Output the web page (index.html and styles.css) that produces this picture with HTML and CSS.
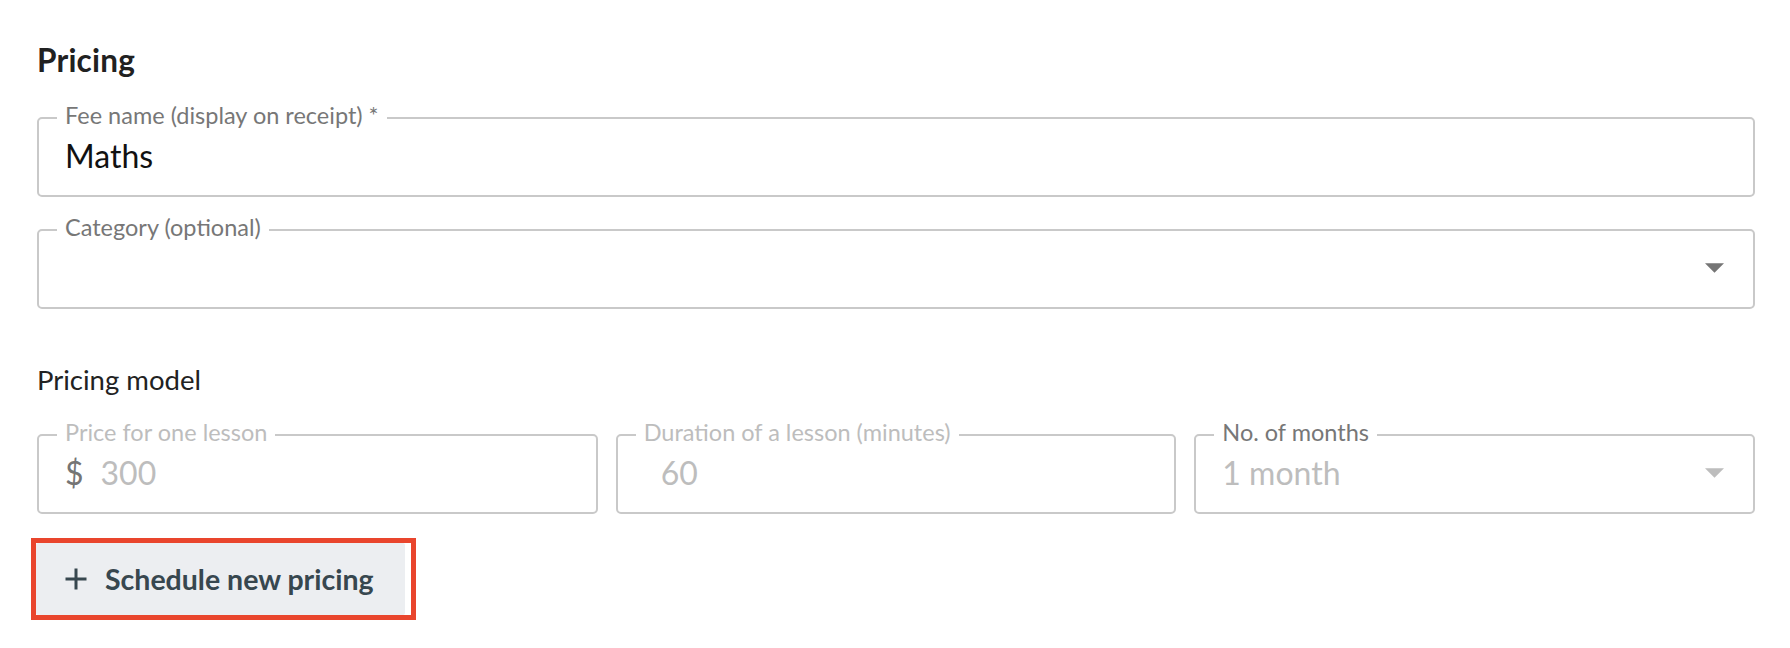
FILE: index.html
```html
<!DOCTYPE html>
<html lang="en">
<head>
<meta charset="utf-8">
<title>Pricing</title>
<link rel="stylesheet" href="styles.css">
</head>
<body>
<main class="page">
  <h2 class="title">Pricing</h2>

  <fieldset class="field field--fee">
    <legend class="field__label">Fee name (display on receipt) *</legend>
    <div class="field__control"><span class="field__value">Maths</span></div>
  </fieldset>

  <fieldset class="field field--category">
    <legend class="field__label">Category (optional)</legend>
    <div class="field__control">
      <span class="field__value"></span>
      <svg class="caret" viewBox="0 0 20 10" aria-hidden="true"><path d="M0 0h20L10 10z"/></svg>
    </div>
  </fieldset>

  <p class="subtitle">Pricing model</p>

  <div class="row">
    <fieldset class="field field--disabled">
      <legend class="field__label">Price for one lesson</legend>
      <div class="field__control">
        <span class="adornment">$</span><span class="field__value">300</span>
      </div>
    </fieldset>
    <fieldset class="field field--disabled field--indented">
      <legend class="field__label">Duration of a lesson (minutes)</legend>
      <div class="field__control"><span class="field__value">60</span></div>
    </fieldset>
    <fieldset class="field field--disabled field--select">
      <legend class="field__label">No. of months</legend>
      <div class="field__control">
        <span class="field__value">1 month</span>
        <svg class="caret" viewBox="0 0 20 10" aria-hidden="true"><path d="M0 0h20L10 10z"/></svg>
      </div>
    </fieldset>
  </div>

  <div class="highlight">
    <button class="btn" type="button">
      <svg class="btn__icon" viewBox="0 0 24 24" aria-hidden="true"><path d="M12 1.5v21M1.5 12h21"/></svg>
      <span>Schedule new pricing</span>
    </button>
  </div>
</main>
</body>
</html>
```

FILE: styles.css
```css
html, body {
  margin: 0;
  padding: 0;
  background: #ffffff;
}

body {
  font-family: Lato, "Open Sans", "Liberation Sans", sans-serif;
  color: #212121;
}

.page {
  padding: 42px 35px 0 37px;
}

.title {
  margin: 0;
  font-size: 31.5px;
  line-height: 36px;
  font-weight: 700;
  letter-spacing: 0.2px;
  color: #212121;
}

.field {
  margin: 26px 0 0;
  padding: 6px 26px 21px;
  border: 2px solid #c9c9c9;
  border-radius: 5px;
  min-width: 0;
}

.field--category {
  margin-top: 19px;
}

.field__label {
  margin-left: -8px;
  padding: 0 8px 6px;
  font-size: 23.5px;
  line-height: 22px;
  color: #777777;
  white-space: nowrap;
}

.field__control {
  display: flex;
  align-items: center;
  height: 36px;
  font-size: 32px;
  line-height: 36px;
  color: #111111;
}

.caret {
  margin-left: auto;
  margin-right: 3px;
  width: 19px;
  height: 10px;
  fill: #757575;
}

.subtitle {
  margin: 55px 0 0;
  font-size: 27.5px;
  line-height: 32px;
  color: #222222;
}

.row {
  display: grid;
  grid-template-columns: repeat(3, 1fr);
  column-gap: 18px;
  margin-top: 25px;
}

.row .field {
  margin-top: 0;
}

.field--disabled .field__label {
  color: #bdbdbd;
}

.field--select .field__label {
  color: #777777;
}

.field--disabled .field__control {
  color: #bdbdbd;
}

.field--disabled .caret {
  fill: #bdbdbd;
}

.field--indented .field__control {
  padding-left: 17px;
}

.adornment {
  color: #757575;
  margin-right: 17px;
}

.highlight {
  display: inline-flex;
  margin: 24px 0 0 -6px;
  padding-right: 6px;
  border: 5px solid #e9452d;
}

.btn {
  display: flex;
  align-items: center;
  gap: 17px;
  height: 72px;
  padding: 0 31px 0 28px;
  border: 0;
  border-radius: 2px;
  background: #eceef1;
  font-family: Lato, "Open Sans", "Liberation Sans", sans-serif;
  font-size: 28.5px;
  font-weight: 700;
  color: #37474f;
  cursor: pointer;
}

.btn__icon {
  width: 24px;
  height: 24px;
  stroke: #37474f;
  stroke-width: 3;
  fill: none;
}
```
